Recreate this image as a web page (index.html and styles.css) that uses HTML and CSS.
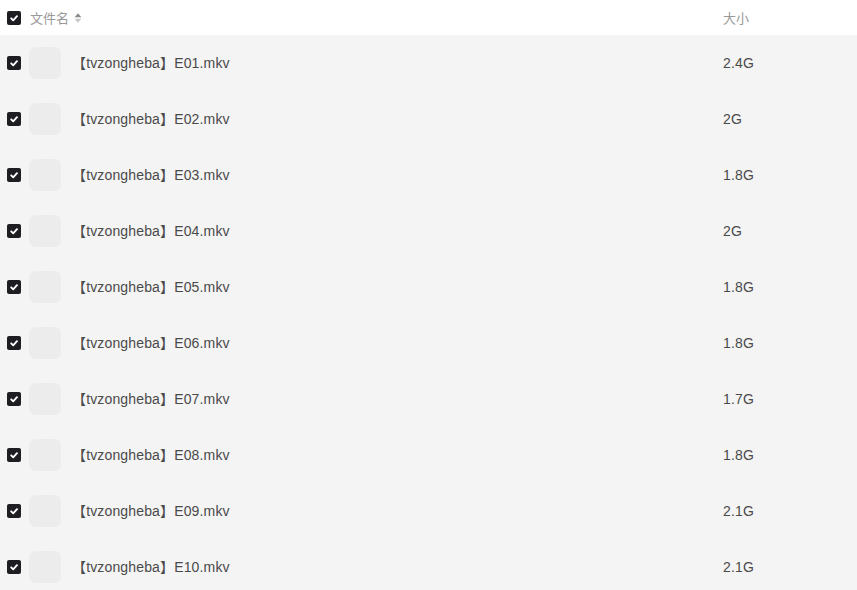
FILE: index.html
```html
<!DOCTYPE html>
<html lang="zh">
<head>
    <meta charset="UTF-8">
    <title>文件列表</title>
    <link rel="stylesheet" href="styles.css">
</head>
<body>
    <div class="list">
        <div class="head">
            <span class="check"><svg viewBox="0 0 14 14"><path d="M4.2 7.3l2 2 3.8-4.1" /></svg></span>
            <span class="name-col">文件名
                <svg class="sort" viewBox="0 0 8 12"><path class="up" d="M4 1.2l3.4 4H0.6z" /><path class="down" d="M4 10.8l3.4-4H0.6z" /></svg>
            </span>
            <span class="size-col">大小</span>
        </div>
        <div class="row">
            <span class="check"><svg viewBox="0 0 14 14"><path d="M4.2 7.3l2 2 3.8-4.1" /></svg></span>
            <span class="thumb"></span>
            <span class="name">【tvzongheba】E01.mkv</span>
            <span class="size">2.4G</span>
        </div>
        <div class="row">
            <span class="check"><svg viewBox="0 0 14 14"><path d="M4.2 7.3l2 2 3.8-4.1" /></svg></span>
            <span class="thumb"></span>
            <span class="name">【tvzongheba】E02.mkv</span>
            <span class="size">2G</span>
        </div>
        <div class="row">
            <span class="check"><svg viewBox="0 0 14 14"><path d="M4.2 7.3l2 2 3.8-4.1" /></svg></span>
            <span class="thumb"></span>
            <span class="name">【tvzongheba】E03.mkv</span>
            <span class="size">1.8G</span>
        </div>
        <div class="row">
            <span class="check"><svg viewBox="0 0 14 14"><path d="M4.2 7.3l2 2 3.8-4.1" /></svg></span>
            <span class="thumb"></span>
            <span class="name">【tvzongheba】E04.mkv</span>
            <span class="size">2G</span>
        </div>
        <div class="row">
            <span class="check"><svg viewBox="0 0 14 14"><path d="M4.2 7.3l2 2 3.8-4.1" /></svg></span>
            <span class="thumb"></span>
            <span class="name">【tvzongheba】E05.mkv</span>
            <span class="size">1.8G</span>
        </div>
        <div class="row">
            <span class="check"><svg viewBox="0 0 14 14"><path d="M4.2 7.3l2 2 3.8-4.1" /></svg></span>
            <span class="thumb"></span>
            <span class="name">【tvzongheba】E06.mkv</span>
            <span class="size">1.8G</span>
        </div>
        <div class="row">
            <span class="check"><svg viewBox="0 0 14 14"><path d="M4.2 7.3l2 2 3.8-4.1" /></svg></span>
            <span class="thumb"></span>
            <span class="name">【tvzongheba】E07.mkv</span>
            <span class="size">1.7G</span>
        </div>
        <div class="row">
            <span class="check"><svg viewBox="0 0 14 14"><path d="M4.2 7.3l2 2 3.8-4.1" /></svg></span>
            <span class="thumb"></span>
            <span class="name">【tvzongheba】E08.mkv</span>
            <span class="size">1.8G</span>
        </div>
        <div class="row">
            <span class="check"><svg viewBox="0 0 14 14"><path d="M4.2 7.3l2 2 3.8-4.1" /></svg></span>
            <span class="thumb"></span>
            <span class="name">【tvzongheba】E09.mkv</span>
            <span class="size">2.1G</span>
        </div>
        <div class="row">
            <span class="check"><svg viewBox="0 0 14 14"><path d="M4.2 7.3l2 2 3.8-4.1" /></svg></span>
            <span class="thumb"></span>
            <span class="name">【tvzongheba】E10.mkv</span>
            <span class="size">2.1G</span>
        </div>
    </div>
</body>
</html>
```

FILE: styles.css
```css
body { margin: 0; background: #fff; font-family: "Liberation Sans", "Noto Sans CJK SC", sans-serif; font-size: 13px; color: #4a4a4a; }
.list { width: 857px; }
.head { height: 35px; display: flex; align-items: center; padding-left: 7px; color: #999; background: #fff; }
.row { height: 56px; display: flex; align-items: center; padding-left: 7px; background: #f4f4f4; font-size: 14px; line-height: 14px; }
.check { width: 14px; height: 14px; border-radius: 2px; background: #1d1d22; display: flex; flex-shrink: 0; }
.check svg { width: 14px; height: 14px; fill: none; stroke: #fff; stroke-width: 1.9; stroke-linecap: round; stroke-linejoin: round; }
.name-col { margin-left: 9px; width: 693px; display: flex; align-items: center; }
.sort { width: 8px; height: 12px; margin-left: 5px; }
.sort .up { fill: #8a8a8a; }
.sort .down { fill: #c8c8c8; }
.size-col, .size { flex: 1; }
.thumb { width: 32px; height: 32px; border-radius: 7px; background: #ececec; margin-left: 8px; flex-shrink: 0; }
.name { margin-left: 11px; width: 651px; color: #4a4a4a; padding-bottom: 1px; letter-spacing: 0.15px; }
.size { color: #4a4a4a; padding-bottom: 1px; letter-spacing: 0.15px; }
```
